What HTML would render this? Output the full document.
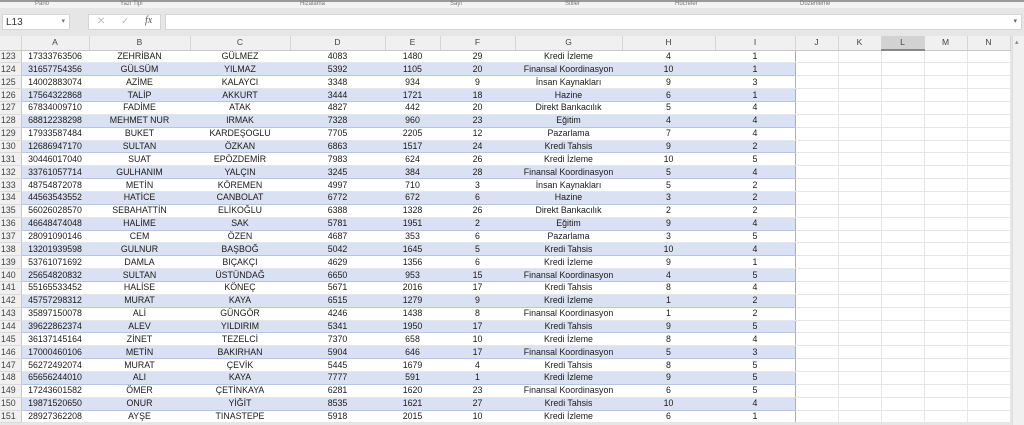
<!DOCTYPE html>
<html><head><meta charset="utf-8"><style>
*{margin:0;padding:0;box-sizing:border-box}
body{width:1024px;height:425px;overflow:hidden;background:#e6e6e6;font-family:"Liberation Sans",sans-serif;position:relative}
.rib{position:absolute;left:0;top:0;width:1024px;height:8px;background:#f3f3f3;border-top:2px solid #9a9a9a;font-size:6px;color:#777;}
.rib span{position:absolute;top:-1px}
.fb{position:absolute;top:8px;left:0;width:1024px;height:28px;background:#e6e6e6}
.nb{position:absolute;left:2px;top:6px;width:68px;height:16px;background:#fff;border:1px solid #d4d4d4;font-size:10px;padding:2px 3px;color:#333}
.ic{position:absolute;left:88px;top:6px;width:73px;height:16px;background:#fff;border:1px solid #d4d4d4;font-size:10px;color:#bbb}
.fx{position:absolute;left:165px;top:6px;width:857px;height:16px;background:#fff;border:1px solid #d4d4d4}
table{position:absolute;left:0;top:36px;border-collapse:collapse;table-layout:fixed;font-size:8.8px;color:#1a1a1a}
td{height:12.86px;line-height:11px;text-align:center;border-right:1px solid #e6e6e6;border-bottom:1px solid #e6e6e6;white-space:nowrap;overflow:hidden;padding:0;background:#fff}
tr.h td{height:14px;background:#f0f0f0;color:#444;border-right:1px solid #d5d5d5;border-bottom:1px solid #c8c8c8;font-size:8.5px}
td.r{background:#f0f0f0;color:#444;text-align:left;padding-left:1px;border-right:1px solid #c8c8c8;border-bottom:1px solid #dadada}
tr.b td.d{background:#d9e1f2;border-bottom:1px solid #b4c6e7;border-top:1px solid #b4c6e7;border-right-color:#d9e1f2}
tr:not(.b) td.d{border-right-color:#fff}
td.i{border-right:1px solid #9bb0d6 !important}
tr.h td.L{background:#d2d2d2;border-bottom:2px solid #888}
.sb{position:absolute;left:1012px;top:36px;width:12px;height:389px;background:#f0f0f0;border-left:1px solid #ddd}
</style></head><body>
<div class="rib"><span style="left:35px">Pano</span><span style="left:120px">Yazı Tipi</span><span style="left:300px">Hizalama</span><span style="left:450px">Sayı</span><span style="left:565px">Stiller</span><span style="left:675px">Hücreler</span><span style="left:800px">Düzenleme</span></div>
<div class="fb"><div class="nb">L13<span style="position:absolute;right:4px;top:2px;font-size:7px;color:#777">▾</span></div><div class="ic"><span style="position:absolute;left:8px;top:1px">✕</span><span style="position:absolute;left:32px;top:1px">✓</span><span style="position:absolute;left:56px;top:0;color:#555;font-style:italic;font-family:'Liberation Serif',serif">fx</span></div><div class="fx"><span style="position:absolute;right:4px;top:2px;font-size:7px;color:#666">▾</span></div></div>
<table>
<colgroup><col style="width:21px"><col style="width:68px"><col style="width:101px"><col style="width:100px"><col style="width:95px"><col style="width:55px"><col style="width:75px"><col style="width:107px"><col style="width:93px"><col style="width:80px"><col style="width:43px"><col style="width:43px"><col style="width:43px"><col style="width:43px"><col style="width:43px"></colgroup>
<tr class="h"><td class="r"></td><td>A</td><td>B</td><td>C</td><td>D</td><td>E</td><td>F</td><td>G</td><td>H</td><td>I</td><td>J</td><td>K</td><td class="L">L</td><td>M</td><td>N</td></tr>
<tbody>
<tr><td class="r">123</td><td class="d">17333763506</td><td class="d">ZEHRİBAN</td><td class="d">GÜLMEZ</td><td class="d">4083</td><td class="d">1480</td><td class="d">29</td><td class="d">Kredi İzleme</td><td class="d">4</td><td class="d i">1</td><td></td><td></td><td></td><td></td><td></td></tr>
<tr class="b"><td class="r">124</td><td class="d">31657754356</td><td class="d">GÜLSÜM</td><td class="d">YILMAZ</td><td class="d">5392</td><td class="d">1105</td><td class="d">20</td><td class="d">Finansal Koordinasyon</td><td class="d">10</td><td class="d i">1</td><td></td><td></td><td></td><td></td><td></td></tr>
<tr><td class="r">125</td><td class="d">14002883074</td><td class="d">AZİME</td><td class="d">KALAYCI</td><td class="d">3348</td><td class="d">934</td><td class="d">9</td><td class="d">İnsan Kaynakları</td><td class="d">9</td><td class="d i">3</td><td></td><td></td><td></td><td></td><td></td></tr>
<tr class="b"><td class="r">126</td><td class="d">17564322868</td><td class="d">TALİP</td><td class="d">AKKURT</td><td class="d">3444</td><td class="d">1721</td><td class="d">18</td><td class="d">Hazine</td><td class="d">6</td><td class="d i">1</td><td></td><td></td><td></td><td></td><td></td></tr>
<tr><td class="r">127</td><td class="d">67834009710</td><td class="d">FADİME</td><td class="d">ATAK</td><td class="d">4827</td><td class="d">442</td><td class="d">20</td><td class="d">Direkt Bankacılık</td><td class="d">5</td><td class="d i">4</td><td></td><td></td><td></td><td></td><td></td></tr>
<tr class="b"><td class="r">128</td><td class="d">68812238298</td><td class="d">MEHMET NUR</td><td class="d">IRMAK</td><td class="d">7328</td><td class="d">960</td><td class="d">23</td><td class="d">Eğitim</td><td class="d">4</td><td class="d i">4</td><td></td><td></td><td></td><td></td><td></td></tr>
<tr><td class="r">129</td><td class="d">17933587484</td><td class="d">BUKET</td><td class="d">KARDEŞOGLU</td><td class="d">7705</td><td class="d">2205</td><td class="d">12</td><td class="d">Pazarlama</td><td class="d">7</td><td class="d i">4</td><td></td><td></td><td></td><td></td><td></td></tr>
<tr class="b"><td class="r">130</td><td class="d">12686947170</td><td class="d">SULTAN</td><td class="d">ÖZKAN</td><td class="d">6863</td><td class="d">1517</td><td class="d">24</td><td class="d">Kredi Tahsis</td><td class="d">9</td><td class="d i">2</td><td></td><td></td><td></td><td></td><td></td></tr>
<tr><td class="r">131</td><td class="d">30446017040</td><td class="d">SUAT</td><td class="d">EPÖZDEMİR</td><td class="d">7983</td><td class="d">624</td><td class="d">26</td><td class="d">Kredi İzleme</td><td class="d">10</td><td class="d i">5</td><td></td><td></td><td></td><td></td><td></td></tr>
<tr class="b"><td class="r">132</td><td class="d">33761057714</td><td class="d">GULHANIM</td><td class="d">YALÇIN</td><td class="d">3245</td><td class="d">384</td><td class="d">28</td><td class="d">Finansal Koordinasyon</td><td class="d">5</td><td class="d i">4</td><td></td><td></td><td></td><td></td><td></td></tr>
<tr><td class="r">133</td><td class="d">48754872078</td><td class="d">METİN</td><td class="d">KÖREMEN</td><td class="d">4997</td><td class="d">710</td><td class="d">3</td><td class="d">İnsan Kaynakları</td><td class="d">5</td><td class="d i">2</td><td></td><td></td><td></td><td></td><td></td></tr>
<tr class="b"><td class="r">134</td><td class="d">44563543552</td><td class="d">HATİCE</td><td class="d">CANBOLAT</td><td class="d">6772</td><td class="d">672</td><td class="d">6</td><td class="d">Hazine</td><td class="d">3</td><td class="d i">2</td><td></td><td></td><td></td><td></td><td></td></tr>
<tr><td class="r">135</td><td class="d">56026028570</td><td class="d">SEBAHATTİN</td><td class="d">ELİKOĞLU</td><td class="d">6388</td><td class="d">1328</td><td class="d">26</td><td class="d">Direkt Bankacılık</td><td class="d">2</td><td class="d i">2</td><td></td><td></td><td></td><td></td><td></td></tr>
<tr class="b"><td class="r">136</td><td class="d">46648474048</td><td class="d">HALİME</td><td class="d">SAK</td><td class="d">5781</td><td class="d">1951</td><td class="d">2</td><td class="d">Eğitim</td><td class="d">9</td><td class="d i">4</td><td></td><td></td><td></td><td></td><td></td></tr>
<tr><td class="r">137</td><td class="d">28091090146</td><td class="d">CEM</td><td class="d">ÖZEN</td><td class="d">4687</td><td class="d">353</td><td class="d">6</td><td class="d">Pazarlama</td><td class="d">3</td><td class="d i">5</td><td></td><td></td><td></td><td></td><td></td></tr>
<tr class="b"><td class="r">138</td><td class="d">13201939598</td><td class="d">GULNUR</td><td class="d">BAŞBOĞ</td><td class="d">5042</td><td class="d">1645</td><td class="d">5</td><td class="d">Kredi Tahsis</td><td class="d">10</td><td class="d i">4</td><td></td><td></td><td></td><td></td><td></td></tr>
<tr><td class="r">139</td><td class="d">53761071692</td><td class="d">DAMLA</td><td class="d">BIÇAKÇI</td><td class="d">4629</td><td class="d">1356</td><td class="d">6</td><td class="d">Kredi İzleme</td><td class="d">9</td><td class="d i">1</td><td></td><td></td><td></td><td></td><td></td></tr>
<tr class="b"><td class="r">140</td><td class="d">25654820832</td><td class="d">SULTAN</td><td class="d">ÜSTÜNDAĞ</td><td class="d">6650</td><td class="d">953</td><td class="d">15</td><td class="d">Finansal Koordinasyon</td><td class="d">4</td><td class="d i">5</td><td></td><td></td><td></td><td></td><td></td></tr>
<tr><td class="r">141</td><td class="d">55165533452</td><td class="d">HALİSE</td><td class="d">KÖNEÇ</td><td class="d">5671</td><td class="d">2016</td><td class="d">17</td><td class="d">Kredi Tahsis</td><td class="d">8</td><td class="d i">4</td><td></td><td></td><td></td><td></td><td></td></tr>
<tr class="b"><td class="r">142</td><td class="d">45757298312</td><td class="d">MURAT</td><td class="d">KAYA</td><td class="d">6515</td><td class="d">1279</td><td class="d">9</td><td class="d">Kredi İzleme</td><td class="d">1</td><td class="d i">2</td><td></td><td></td><td></td><td></td><td></td></tr>
<tr><td class="r">143</td><td class="d">35897150078</td><td class="d">ALİ</td><td class="d">GÜNGÖR</td><td class="d">4246</td><td class="d">1438</td><td class="d">8</td><td class="d">Finansal Koordinasyon</td><td class="d">1</td><td class="d i">2</td><td></td><td></td><td></td><td></td><td></td></tr>
<tr class="b"><td class="r">144</td><td class="d">39622862374</td><td class="d">ALEV</td><td class="d">YILDIRIM</td><td class="d">5341</td><td class="d">1950</td><td class="d">17</td><td class="d">Kredi Tahsis</td><td class="d">9</td><td class="d i">5</td><td></td><td></td><td></td><td></td><td></td></tr>
<tr><td class="r">145</td><td class="d">36137145164</td><td class="d">ZİNET</td><td class="d">TEZELCİ</td><td class="d">7370</td><td class="d">658</td><td class="d">10</td><td class="d">Kredi İzleme</td><td class="d">8</td><td class="d i">4</td><td></td><td></td><td></td><td></td><td></td></tr>
<tr class="b"><td class="r">146</td><td class="d">17000460106</td><td class="d">METİN</td><td class="d">BAKIRHAN</td><td class="d">5904</td><td class="d">646</td><td class="d">17</td><td class="d">Finansal Koordinasyon</td><td class="d">5</td><td class="d i">3</td><td></td><td></td><td></td><td></td><td></td></tr>
<tr><td class="r">147</td><td class="d">56272492074</td><td class="d">MURAT</td><td class="d">ÇEVİK</td><td class="d">5445</td><td class="d">1679</td><td class="d">4</td><td class="d">Kredi Tahsis</td><td class="d">8</td><td class="d i">5</td><td></td><td></td><td></td><td></td><td></td></tr>
<tr class="b"><td class="r">148</td><td class="d">65656244010</td><td class="d">ALI</td><td class="d">KAYA</td><td class="d">7777</td><td class="d">591</td><td class="d">1</td><td class="d">Kredi İzleme</td><td class="d">9</td><td class="d i">5</td><td></td><td></td><td></td><td></td><td></td></tr>
<tr><td class="r">149</td><td class="d">17243601582</td><td class="d">ÖMER</td><td class="d">ÇETİNKAYA</td><td class="d">6281</td><td class="d">1620</td><td class="d">23</td><td class="d">Finansal Koordinasyon</td><td class="d">6</td><td class="d i">5</td><td></td><td></td><td></td><td></td><td></td></tr>
<tr class="b"><td class="r">150</td><td class="d">19871520650</td><td class="d">ONUR</td><td class="d">YİĞİT</td><td class="d">8535</td><td class="d">1621</td><td class="d">27</td><td class="d">Kredi Tahsis</td><td class="d">10</td><td class="d i">4</td><td></td><td></td><td></td><td></td><td></td></tr>
<tr><td class="r">151</td><td class="d">28927362208</td><td class="d">AYŞE</td><td class="d">TINASTEPE</td><td class="d">5918</td><td class="d">2015</td><td class="d">10</td><td class="d">Kredi İzleme</td><td class="d">6</td><td class="d i">1</td><td></td><td></td><td></td><td></td><td></td></tr>
</tbody></table>
<div class="sb"><span style="position:absolute;left:2px;top:2px;font-size:7px;color:#888">▴</span></div>
</body></html>
